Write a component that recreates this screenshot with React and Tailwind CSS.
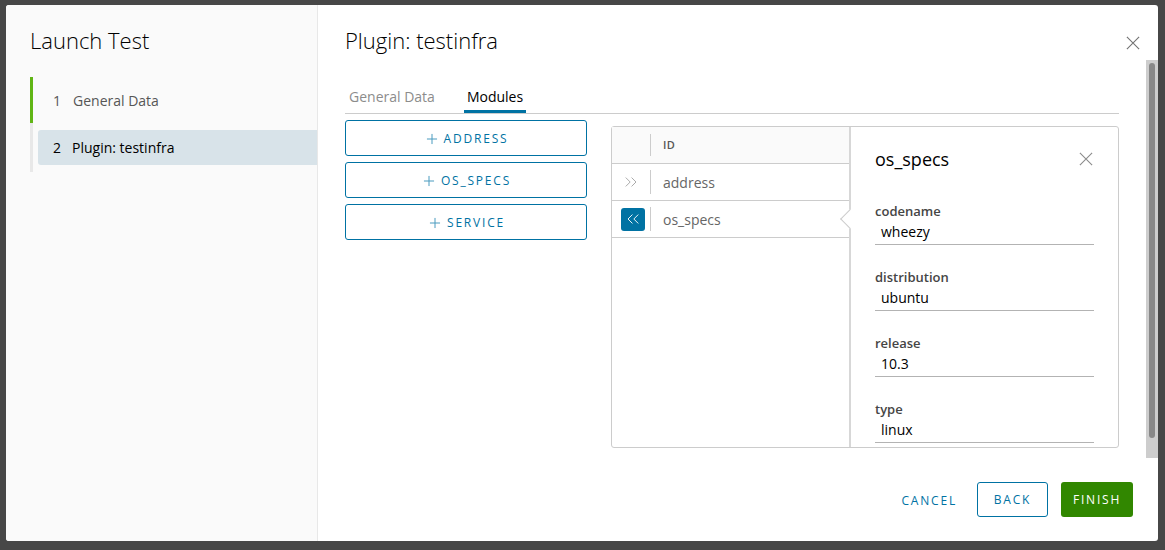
import { ChevronsLeft, ChevronsRight, Plus } from "lucide-react";

const font = { fontFamily: '"Open Sans", "Liberation Sans", sans-serif' };

function CloseIcon({ size = 16, className = "" }) {
  return (
    <svg width={size} height={size} viewBox="0 0 16 16" className={className}>
      <path d="M1 1 L15 15 M15 1 L1 15" stroke="currentColor" strokeWidth="1.3" fill="none" />
    </svg>
  );
}

function AddButton({ label }) {
  return (
    <button className="flex h-[36px] w-full items-center justify-center gap-[4px] rounded-[3px] border border-[#0072a3] bg-white pt-[1px] text-[12px] font-medium tracking-[0.15em] text-[#0072a3]">
      <Plus size={16} strokeWidth={1.5} className="text-[#4a9bbf]" />
      {label}
    </button>
  );
}

function Field({ label, value }) {
  return (
    <div className="mb-[23px]">
      <div className="text-[13px] font-semibold leading-[18px] text-[#454545]">{label}</div>
      <div className="mt-[2px] border-b border-[#b3b3b3] px-[6px] pb-[2px] text-[14px] leading-[20px] text-[#000]">
        {value}
      </div>
    </div>
  );
}

export default function App() {
  return (
    <div className="h-[550px] w-[1165px] bg-[#474747] pl-[6px] pt-[5px]" style={font}>
      <div className="flex h-[536px] w-[1152px] overflow-hidden rounded-[3px] bg-white">
        {/* wizard steps */}
        <aside className="w-[312px] shrink-0 border-r border-[#e8e8e8] bg-[#fafafa] pl-[24px] pt-[21px]">
          <h1 className="text-[22px] font-light leading-[28px] text-[#000]">Launch Test</h1>
          <div className="mt-[23px]">
            <div className="border-l-[3px] border-[#60b515] pb-[5px] pl-[5px] pt-[6px]">
              <div className="flex h-[35px] items-center gap-[12px] pl-[15px] text-[14px] text-[#565656]">
                <span>1</span>
                <span>General Data</span>
              </div>
            </div>
            <div className="border-l-[3px] border-[#e8e8e8] pb-[7px] pl-[5px] pt-[7px]">
              <div className="flex h-[35px] items-center gap-[11px] rounded-l-[3px] bg-[#d8e3e9] pl-[15px] text-[14px] font-medium text-[#000]">
                <span>2</span>
                <span>Plugin: testinfra</span>
              </div>
            </div>
          </div>
        </aside>

        {/* main */}
        <section className="flex flex-1 flex-col">
          <header className="flex h-[55px] shrink-0 items-start justify-between pl-[27px] pr-[18px] pt-[21px]">
            <h2 className="text-[22px] font-light leading-[28px] text-[#000]">Plugin: testinfra</h2>
            <CloseIcon size={14} className="mt-[10px] text-[#747474]" />
          </header>

          <div className="flex h-[398px] shrink-0">
            <div className="flex-1 overflow-hidden pl-[27px] pr-[27px] pt-[27px]">
              <div className="flex gap-[25px] border-b border-[#cccccc] text-[14px] leading-[20px]">
                <div className="px-[4px] pb-[6px] text-[#8c8c8c]">General Data</div>
                <div className="border-b-[3px] border-[#0072a3] px-[3px] pb-[3px] text-[#000]">Modules</div>
              </div>

              <div className="flex gap-[24px]">
                <div className="mt-[6px] flex w-[242px] shrink-0 flex-col gap-[6px]">
                  <AddButton label="ADDRESS" />
                  <AddButton label="OS_SPECS" />
                  <AddButton label="SERVICE" />
                </div>

                {/* datagrid */}
                <div className="mt-[12px] flex h-[322px] flex-1 rounded-[3px] border border-[#cccccc]">
                  <div className="relative w-[239px] shrink-0 border-r-2 border-[#d7d7d7]">
                    <div className="flex h-[37px] items-center border-b border-[#cccccc] bg-[#fafafa]">
                      <div className="h-[22px] w-[39px] border-r border-[#cccccc]" />
                      <div className="pl-[12px] text-[11px] font-semibold tracking-[0.03em] text-[#565656]">ID</div>
                    </div>
                    <div className="flex h-[37px] items-center border-b border-[#cccccc]">
                      <div className="flex h-[24px] w-[39px] items-center justify-center border-r border-[#cccccc]">
                        <ChevronsRight size={20} strokeWidth={1} className="text-[#9a9a9a]" />
                      </div>
                      <div className="pl-[12px] text-[14px] text-[#666666]">address</div>
                    </div>
                    <div className="relative flex h-[37px] items-center border-b border-[#cccccc]">
                      <div className="flex h-[24px] w-[39px] items-center justify-end border-r border-[#cccccc] pr-[5px]">
                        <div className="flex h-[23px] w-[24px] items-center justify-center rounded-[3px] bg-[#0072a3]">
                          <ChevronsLeft size={20} strokeWidth={1.1} className="text-white" />
                        </div>
                      </div>
                      <div className="pl-[12px] text-[14px] text-[#666666]">os_specs</div>
                      <div className="absolute right-[-8px] top-[11px] h-[14px] w-[14px] rotate-45 border-b border-l border-[#cccccc] bg-white" />
                    </div>
                  </div>

                  <div className="flex-1 px-[24px] pt-[19px]">
                    <div className="flex items-center justify-between">
                      <div className="text-[18px] leading-[26px] text-[#000]">os_specs</div>
                      <CloseIcon size={14} className="mr-[1px] text-[#8c8c8c]" />
                    </div>
                    <div className="mt-[30px]">
                      <Field label="codename" value="wheezy" />
                      <Field label="distribution" value="ubuntu" />
                      <Field label="release" value="10.3" />
                      <Field label="type" value="linux" />
                    </div>
                  </div>
                </div>
              </div>
            </div>

            {/* scrollbar */}
            <div className="w-[12px] shrink-0 bg-[#cdcdcd] px-[3px] pt-[3px]">
              <div className="h-[375px] rounded-full bg-[#888888]" />
            </div>
          </div>

          <footer className="flex flex-1 items-center justify-end pb-[1px] pr-[25px]">
            <button className="px-[12px] pt-[3px] text-[12px] font-medium tracking-[0.15em] text-[#0072a3]">CANCEL</button>
            <button className="ml-[8px] h-[35px] w-[71px] rounded-[3px] border border-[#0072a3] pt-[2px] text-[12px] font-medium tracking-[0.15em] text-[#0072a3]">
              BACK
            </button>
            <button className="ml-[13px] h-[35px] w-[72px] rounded-[3px] bg-[#318700] pt-[2px] text-[12px] font-medium tracking-[0.15em] text-white">
              FINISH
            </button>
          </footer>
        </section>
      </div>
    </div>
  );
}
